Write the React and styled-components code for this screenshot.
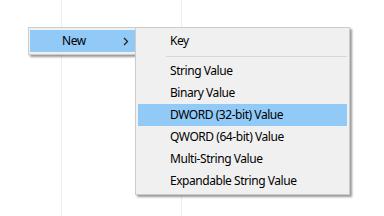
import styled, { createGlobalStyle } from "styled-components";

const GlobalStyle = createGlobalStyle`
  html, body {
    margin: 0;
    padding: 0;
    background: #ffffff;
  }
  body {
    font-family: "Noto Sans", "Liberation Sans", sans-serif;
    font-size: 12px;
    letter-spacing: -0.45px;
    color: #000000;
  }
`;

const Page = styled.div`
  position: relative;
  width: 384px;
  height: 216px;
  overflow: hidden;
  display: flex;
`;

const Column = styled.div`
  width: ${(props) => props.width}px;
  height: 100%;
  border-right: 1px solid #e9eff7;
  flex-shrink: 0;
`;

const Menu = styled.div`
  position: absolute;
  left: ${(props) => props.left}px;
  top: ${(props) => props.top}px;
  width: ${(props) => props.width}px;
  box-sizing: border-box;
  background: #f0f0f0;
  border: 1px solid #cccccc;
  padding: ${(props) => props.pad || "2px"};
  box-shadow: 2px 2px 2px rgba(0, 0, 0, 0.4);
  display: flex;
  flex-direction: column;
`;

const Item = styled.div`
  height: 22px;
  display: flex;
  align-items: center;
  padding-left: ${(props) => props.indent}px;
  padding-right: ${(props) => props.endPad || 8}px;
  background: ${(props) => (props.active ? "#91c9f7" : "transparent")};
  white-space: nowrap;
`;

const Label = styled.span`
  flex: 1;
  line-height: 22px;
`;

const Separator = styled.div`
  height: 8px;
  display: flex;
  align-items: center;
  padding-left: 28px;

  &::after {
    content: "";
    flex: 1;
    height: 1px;
    background: #d7d7d7;
  }
`;

function Chevron() {
  return (
    <svg width="6" height="9" viewBox="0 0 6 9">
      <path d="M1 1 L4.5 4.5 L1 8" fill="none" stroke="#222" strokeWidth="1.3" />
    </svg>
  );
}

const items = [
  "String Value",
  "Binary Value",
  "DWORD (32-bit) Value",
  "QWORD (64-bit) Value",
  "Multi-String Value",
  "Expandable String Value",
];

export default function App() {
  return (
    <>
      <GlobalStyle />
      <Page>
        <Column width={61} />
        <Column width={119} />

        <Menu left={28} top={27} width={110} pad="2px 2px 2px 1px">
          <Item active indent={32} endPad={6}>
            <Label>New</Label>
            <Chevron />
          </Item>
        </Menu>

        <Menu left={135} top={27} width={215}>
          <Item indent={32}>
            <Label>Key</Label>
          </Item>
          <Separator />
          {items.map((text) => (
            <Item key={text} indent={32} active={text.startsWith("DWORD")}>
              <Label>{text}</Label>
            </Item>
          ))}
        </Menu>
      </Page>
    </>
  );
}
